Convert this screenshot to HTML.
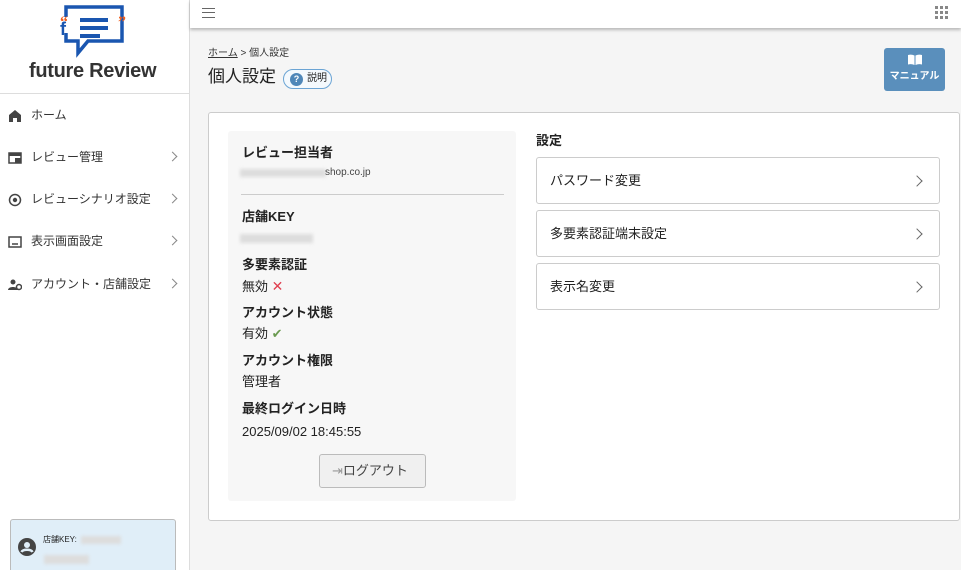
<!DOCTYPE html>
<html><head><meta charset="utf-8"><style>
*{box-sizing:border-box;margin:0;padding:0}
html,body{width:961px;height:570px;overflow:hidden}
body{font-family:"Liberation Sans","Noto Sans CJK JP",sans-serif;color:#222;background:#f5f5f5;position:relative;font-size:13px;line-height:1.2}
.side{position:absolute;left:0;top:0;width:190px;height:570px;background:#fff;border-right:1px solid #ddd}
.logo{height:94px;border-bottom:1px solid #ddd;position:relative}
.logo .t{position:absolute;left:29px;top:59px;font-size:20px;font-weight:bold;color:#333;letter-spacing:-0.3px}
.nav{position:absolute;left:0;width:189px;height:20px;font-size:12px;color:#333}
.nav svg{position:absolute;left:8px;top:3px}
.nav span{position:absolute;left:31px;top:2px}
.nav i{position:absolute;left:169px;top:5px;width:7px;height:7px;border-right:1.5px solid #888;border-top:1.5px solid #888;transform:rotate(45deg)}
.top{position:absolute;left:190px;top:0;width:771px;height:28px;background:#fff;box-shadow:0 2px 3px rgba(0,0,0,.25)}
.card{position:absolute;left:208px;top:112px;width:752px;height:409px;background:#fff;border:1px solid #ccc;border-radius:3px}
.panel{position:absolute;left:228px;top:131px;width:288px;height:370px;background:#f7f7f7;border-radius:3px}
.lb{position:absolute;left:242px;font-weight:bold;font-size:13px}
.vl{position:absolute;left:242px;font-size:13px}
.btn{position:absolute;left:536px;width:404px;height:47px;border:1px solid #ccc;border-radius:3px;background:#fff;font-size:13px}
.btn span{position:absolute;left:13px;top:15px}
.btn i{position:absolute;right:18px;top:19px;width:8px;height:8px;border-right:1.5px solid #666;border-top:1.5px solid #666;transform:rotate(45deg)}
.blur{position:absolute;background:#ddd;filter:blur(1.5px)}
</style></head><body>
<div class="side">
 <div class="logo">
  <svg style="position:absolute;left:58px;top:3px" width="72" height="56" viewBox="0 0 72 56">
   <path d="M8 14V4H64V38H30L20 50V38H8V30" fill="none" stroke="#1a56b0" stroke-width="3.5"/>
   <rect x="22" y="15" width="28" height="4" fill="#1a56b0"/><rect x="22" y="23" width="28" height="4" fill="#1a56b0"/><rect x="22" y="31" width="20" height="4" fill="#1a56b0"/>
   <text x="2" y="32" font-size="18" fill="#1a56b0" font-weight="bold" font-family="Liberation Sans">f</text>
   <text x="2" y="24" font-size="16" fill="#f06020" font-weight="bold" font-family="Liberation Serif">“</text>
   <text x="60" y="24" font-size="16" fill="#f06020" font-weight="bold" font-family="Liberation Serif">”</text>
  </svg>
  <div class="t">future Review</div>
 </div>
 <div class="nav" style="top:106px"><svg width="14" height="14" viewBox="0 0 14 14"><path d="M7 1L1 6V13H5V9H9V13H13V6Z" fill="#444"/></svg><span>ホーム</span></div>
 <div class="nav" style="top:148px"><svg width="14" height="14" viewBox="0 0 14 14"><rect x="1" y="2" width="12" height="10" fill="none" stroke="#444" stroke-width="1.5"/><rect x="1" y="2" width="12" height="3" fill="#444"/><rect x="7" y="7" width="6" height="5" fill="#444"/></svg><span>レビュー管理</span><i></i></div>
 <div class="nav" style="top:190px"><svg width="14" height="14" viewBox="0 0 14 14"><circle cx="7" cy="7" r="5.5" fill="none" stroke="#444" stroke-width="1.5"/><circle cx="7" cy="7" r="2.2" fill="#444"/></svg><span>レビューシナリオ設定</span><i></i></div>
 <div class="nav" style="top:232px"><svg width="14" height="14" viewBox="0 0 14 14"><rect x="1" y="2" width="12" height="10" fill="none" stroke="#444" stroke-width="1.5"/><path d="M4 9H10" stroke="#444" stroke-width="1.5"/></svg><span>表示画面設定</span><i></i></div>
 <div class="nav" style="top:275px"><svg width="14" height="14" viewBox="0 0 14 14"><circle cx="5" cy="4" r="2.5" fill="#444"/><path d="M0 12C0 8 10 8 10 12Z" fill="#444"/><circle cx="11" cy="9" r="2.5" fill="none" stroke="#444" stroke-width="1.5"/></svg><span>アカウント・店舗設定</span><i></i></div>
 <div style="position:absolute;left:10px;top:519px;width:166px;height:60px;background:#e0eef8;border:1px solid #bbb;border-radius:3px">
  <svg style="position:absolute;left:7px;top:18px" width="18" height="18" viewBox="0 0 18 18"><circle cx="9" cy="9" r="9" fill="#444"/><circle cx="9" cy="7" r="3" fill="#e0eef8"/><path d="M3.5 14C5 11 13 11 14.5 14" stroke="#e0eef8" stroke-width="2.5" fill="none"/></svg>
  <div style="position:absolute;left:32px;top:15px;font-size:8px">店舗KEY:</div>
  <div class="blur" style="left:70px;top:16px;width:40px;height:8px"></div>
  <div class="blur" style="left:33px;top:35px;width:45px;height:9px"></div>
 </div>
</div>
<div class="top">
 <div style="position:absolute;left:12px;top:8px;width:13px;height:10px;border-top:1.5px solid #666;border-bottom:1.5px solid #666"><div style="margin-top:3px;border-top:1.5px solid #666"></div></div>
 <svg style="position:absolute;left:745px;top:6px" width="14" height="14" viewBox="0 0 14 14" fill="#888"><rect x="0" y="0" width="3" height="3"/><rect x="5" y="0" width="3" height="3"/><rect x="10" y="0" width="3" height="3"/><rect x="0" y="5" width="3" height="3"/><rect x="5" y="5" width="3" height="3"/><rect x="10" y="5" width="3" height="3"/><rect x="0" y="10" width="3" height="3"/><rect x="5" y="10" width="3" height="3"/><rect x="10" y="10" width="3" height="3"/></svg>
</div>
<div style="position:absolute;left:208px;top:48px;font-size:10px;color:#333"><span style="text-decoration:underline">ホーム</span> &gt; 個人設定</div>
<div style="position:absolute;left:208px;top:67px;font-size:17px;color:#222">個人設定</div>
<div style="position:absolute;left:283px;top:69px;width:49px;height:20px;border:1px solid #6ba4d4;border-radius:10px;background:#f4f9fd;font-size:10px">
 <div style="position:absolute;left:6px;top:3px;width:13px;height:13px;border-radius:50%;background:#4f87b8;color:#fff;font-size:9px;font-weight:bold;text-align:center;line-height:13px">?</div>
 <span style="position:absolute;left:23px;top:3px">説明</span></div>
<div style="position:absolute;left:884px;top:48px;width:61px;height:43px;background:#5a8fbc;border-radius:3px;color:#fff;text-align:center">
 <svg style="margin-top:6px" width="14" height="11" viewBox="0 0 14 11"><path d="M0 1Q3.5 0 6.5 1.5V11Q3.5 9.5 0 10.5Z M7.5 1.5Q10.5 0 14 1V10.5Q10.5 9.5 7.5 11Z" fill="#fff"/></svg>
 <div style="font-size:10px;font-weight:bold;margin-top:2px">マニュアル</div></div>
<div class="card"></div>
<div class="panel"></div>
<div class="lb" style="top:145px">レビュー担当者</div>
<div class="blur" style="left:240px;top:169px;width:86px;height:8px"></div>
<div style="position:absolute;left:325px;top:167px;font-size:10px;color:#444">shop.co.jp</div>
<div style="position:absolute;left:241px;top:194px;width:263px;border-top:1px solid #ccc"></div>
<div class="lb" style="top:209px">店舗KEY</div>
<div class="blur" style="left:240px;top:234px;width:73px;height:9px"></div>
<div class="lb" style="top:257px">多要素認証</div>
<div class="vl" style="top:278px">無効 <span style="color:#e04050;font-size:14px">✕</span></div>
<div class="lb" style="top:305px">アカウント状態</div>
<div class="vl" style="top:326px">有効 <span style="color:#6a9a50">✔</span></div>
<div class="lb" style="top:353px">アカウント権限</div>
<div class="vl" style="top:374px">管理者</div>
<div class="lb" style="top:401px">最終ログイン日時</div>
<div class="vl" style="top:424px">2025/09/02 18:45:55</div>
<div style="position:absolute;left:319px;top:454px;width:107px;height:34px;border:1px solid #bbb;border-radius:3px;background:#f0f0f0;font-size:13px;color:#444"><span style="position:absolute;left:12px;top:8px"><span style="color:#999">⇥</span>ログアウト</span></div>
<div style="position:absolute;left:536px;top:133px;font-weight:bold;font-size:13px">設定</div>
<div class="btn" style="top:157px"><span>パスワード変更</span><i></i></div>
<div class="btn" style="top:210px"><span>多要素認証端末設定</span><i></i></div>
<div class="btn" style="top:263px"><span>表示名変更</span><i></i></div>
</body></html>
